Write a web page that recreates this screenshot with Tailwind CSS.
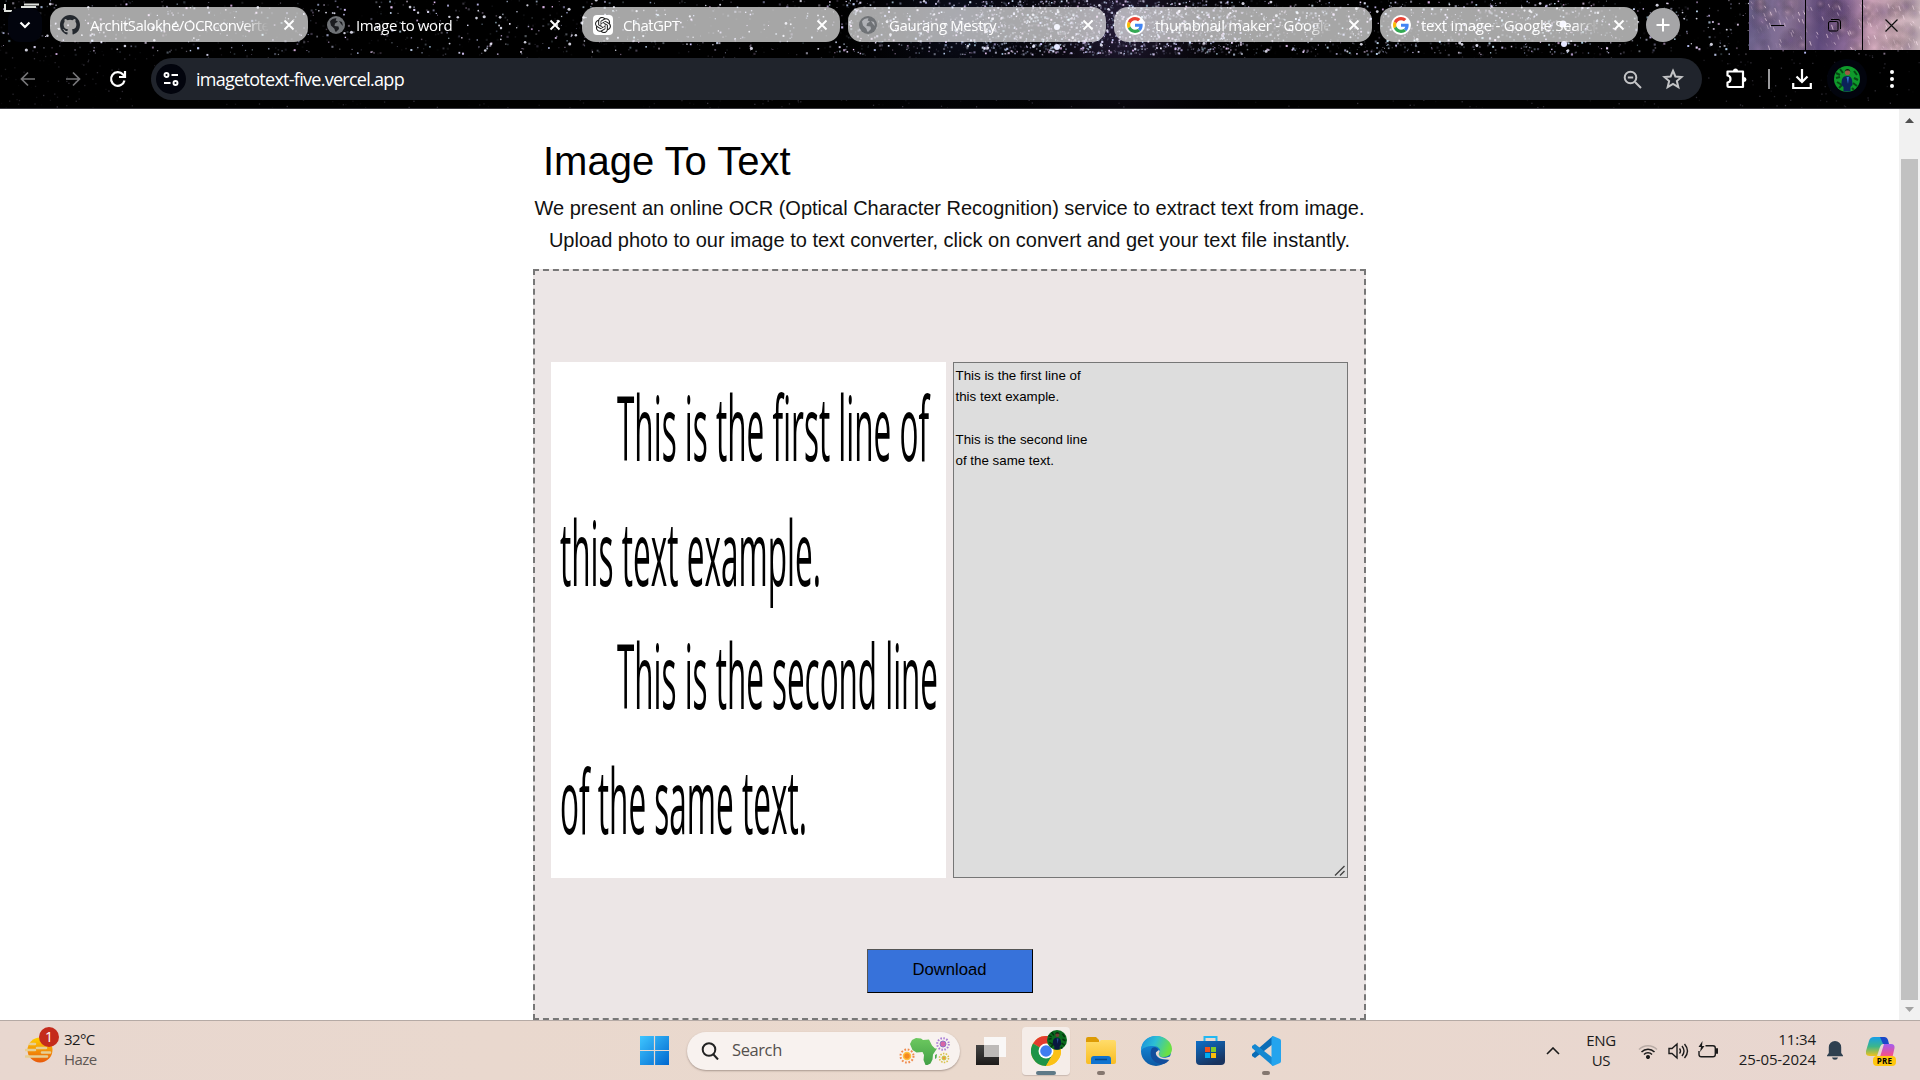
<!DOCTYPE html>
<html lang="en">
<head>
<meta charset="utf-8">
<title>Image to word</title>
<script src="https://cdn.jsdelivr.net/npm/@tailwindcss/browser@4"></script>
</head>
<body class="w-[1920px] h-[1080px] overflow-hidden bg-white flex flex-col font-['Open_Sans','Noto_Sans',sans-serif]">
<svg class="hidden">
  <symbol id="x" viewBox="0 0 12 12"><path d="M1.5 1.5l9 9M10.5 1.5l-9 9" stroke="#fff" stroke-width="1.9" fill="none"/></symbol>
  <symbol id="globe" viewBox="0 0 18 18"><circle cx="9" cy="9" r="9" fill="#6f7276"/><path d="M3 5.5C4.500 3 7 2 9.500 2.200L8.700 4.500 11 5.500 8 7.500 7.500 10 11.500 10.500 12 13 9 16C7.500 15 8 13.500 7.200 12.500L4 9.500ZM12 5l3 1 1 4-2-2z" fill="#1b1c20"/></symbol>
  <symbol id="globe2" viewBox="0 0 18 18"><circle cx="9" cy="9" r="9" fill="#6f7276"/><path d="M3 5.500C4.500 3 7 2 9.500 2.200L8.700 4.500 11 5.500 8 7.500 7.500 10 11.500 10.500 12 13 9 16C7.500 15 8 13.500 7.200 12.500L4 9.500ZM12 5l3 1 1 4-2-2z" fill="#b0b1b6"/></symbol>
  <symbol id="g" viewBox="0 0 48 48"><path fill="#EA4335" d="M24 9.500c3.540 0 6.710 1.220 9.210 3.600l6.850-6.850C35.900 2.380 30.470 0 24 0 14.620 0 6.510 5.380 2.560 13.220l7.980 6.190C12.430 13.720 17.740 9.500 24 9.500z"/><path fill="#4285F4" d="M46.980 24.550c0-1.570-.15-3.090-.38-4.550H24v9.020h12.940c-.58 2.960-2.260 5.480-4.780 7.180l7.730 6c4.510-4.180 7.090-10.360 7.090-17.650z"/><path fill="#FBBC05" d="M10.530 28.590c-.48-1.450-.76-2.990-.76-4.590s.27-3.140.76-4.590l-7.980-6.190C.92 16.460 0 20.120 0 24c0 3.880.92 7.540 2.560 10.780l7.970-6.190z"/><path fill="#34A853" d="M24 48c6.480 0 11.930-2.130 15.890-5.810l-7.730-6c-2.150 1.450-4.920 2.300-8.160 2.300-6.260 0-11.570-4.220-13.470-9.910l-7.980 6.190C6.510 42.620 14.620 48 24 48z"/></symbol>
  <symbol id="person" viewBox="0 0 26 26"><circle cx="13" cy="13" r="13" fill="#0f9a2c"/><path d="M2 7l4 2M20 5l3 4M3 16l5 3M19 17l4 3M6 3l3 4M5 22l3-3M18 22l2 2M2 12l4-1M20 12l4 2" stroke="#064a15" stroke-width="2"/><path d="M7.500 19c0-6 1-9 5.500-9s5.500 3 5.500 9l-2 2v4.500H9.500V21z" fill="#0b2358"/><path d="M12.500 11h2.500l-1 7z" fill="#2f6fd0"/><circle cx="13.500" cy="6.500" r="2.600" fill="#9a5c45"/><path d="M10.700 6c0-4 5.600-4 5.600 0l-1-1.500h-3.600z" fill="#17100f"/></symbol>
</svg>

<header class="relative h-[109px] shrink-0 bg-black border-b border-[#3a3a40] overflow-hidden text-white">
  <canvas id="sky" width="1920" height="109" class="absolute inset-0"></canvas>
  <div class="relative h-[50px] flex">
    <div class="w-[50px] pl-2 pt-2 shrink-0"><div class="size-[34px] rounded-xl bg-[#02040d] flex items-center justify-center"><svg class="w-3 h-2" viewBox="0 0 12 8"><path d="M1.500 1.500L6 6l4.500-4.500" stroke="#fff" stroke-width="2.200" fill="none"/></svg></div></div>
    <nav class="flex gap-2 pt-[7px] text-[15px] tracking-[-0.37px] [&_span]:pt-px">
      <div class="w-[258px] h-[35px] rounded-[14px] bg-white/65 flex items-center pl-2.5 pr-[13px]"><svg class="size-5 shrink-0" viewBox="0 0 16 16"><path fill="#24292f" d="M8 0C3.580 0 0 3.580 0 8c0 3.540 2.290 6.530 5.470 7.590.4.070.55-.17.55-.38v-1.490c-2.230.48-2.700-.95-2.700-.95-.36-.92-.89-1.170-.89-1.170-.73-.5.060-.49.060-.49.8.060 1.230.83 1.230.83.710 1.220 1.870.87 2.330.66.070-.52.280-.87.500-1.070-1.780-.2-3.640-.89-3.640-3.950 0-.87.310-1.590.820-2.150-.08-.2-.36-1.020.08-2.120 0 0 .67-.21 2.200.82a7.500 7.500 0 014 0c1.530-1.040 2.200-.82 2.200-.82.440 1.100.160 1.920.080 2.120.510.560.820 1.270.820 2.150 0 3.070-1.870 3.750-3.650 3.950.290.250.540.730.540 1.480v2.200c0 .210.150.460.550.380A8 8 0 0016 8c0-4.420-3.580-8-8-8z"/></svg><span class="ml-2.5 w-[178px] whitespace-nowrap overflow-hidden mask-r-from-86% tracking-[-0.55px]">ArchitSalokhe/OCRconverter</span><svg class="ml-auto size-3 shrink-0"><use href="#x"/></svg></div>
      <div class="w-[258px] h-[35px] flex items-center pl-[11px] pr-[13px]"><svg class="size-[18px]"><use href="#globe"/></svg><span class="ml-[11px] whitespace-nowrap">Image to word</span><svg class="ml-auto size-3"><use href="#x"/></svg></div>
      <div class="w-[258px] h-[35px] rounded-[14px] bg-white/65 flex items-center pl-[11px] pr-[12px]"><div class="size-5 rounded bg-white flex items-center justify-center"><svg class="size-4" viewBox="0 0 24 24" fill="#222"><path d="M22.2819 9.8211a5.9847 5.9847 0 0 0-.5157-4.9108 6.0462 6.0462 0 0 0-6.5098-2.9A6.0651 6.0651 0 0 0 4.9807 4.1818a5.9847 5.9847 0 0 0-3.9977 2.9 6.0462 6.0462 0 0 0 .7427 7.0966 5.98 5.98 0 0 0 .511 4.9107 6.051 6.051 0 0 0 6.5146 2.9001A5.9847 5.9847 0 0 0 13.2599 24a6.0557 6.0557 0 0 0 5.7718-4.2058 5.9894 5.9894 0 0 0 3.9977-2.9001 6.0557 6.0557 0 0 0-.7475-7.0729zm-9.022 12.6081a4.4755 4.4755 0 0 1-2.8764-1.0408l.1419-.0804 4.7783-2.7582a.7948.7948 0 0 0 .3927-.6813v-6.7369l2.02 1.1686a.071.071 0 0 1 .038.052v5.5826a4.504 4.504 0 0 1-4.4945 4.4944zm-9.6607-4.1254a4.4708 4.4708 0 0 1-.5346-3.0137l.142.0852 4.783 2.7582a.7712.7712 0 0 0 .7806 0l5.8428-3.3685v2.3324a.0804.0804 0 0 1-.0332.0615L9.74 19.9502a4.4992 4.4992 0 0 1-6.1408-1.6464zM2.3408 7.8956a4.485 4.485 0 0 1 2.3655-1.9728V11.6a.7664.7664 0 0 0 .3879.6765l5.8144 3.3543-2.0201 1.1685a.0757.0757 0 0 1-.071 0l-4.8303-2.7865A4.504 4.504 0 0 1 2.3408 7.872zm16.5963 3.8558L13.1038 8.364 15.1192 7.2a.0757.0757 0 0 1 .071 0l4.8303 2.7913a4.4944 4.4944 0 0 1-.6765 8.1042v-5.6772a.79.79 0 0 0-.407-.667zm2.0107-3.0231l-.142-.0852-4.7735-2.7818a.7759.7759 0 0 0-.7854 0L9.409 9.2297V6.8974a.0662.0662 0 0 1 .0284-.0615l4.8303-2.7866a4.4992 4.4992 0 0 1 6.6802 4.66zM8.3065 12.863l-2.02-1.1638a.0804.0804 0 0 1-.038-.0567V6.0742a4.4992 4.4992 0 0 1 7.3757-3.4537l-.142.0805L8.704 5.459a.7948.7948 0 0 0-.3927.6813zm1.0976-2.3654l2.602-1.4998 2.6069 1.4998v2.9994l-2.5974 1.4997-2.6067-1.4997Z"/></svg></div><span class="ml-2.5 tracking-[-0.6px]">ChatGPT</span><svg class="ml-auto size-3"><use href="#x"/></svg></div>
      <div class="w-[258px] h-[35px] rounded-[14px] bg-white/65 flex items-center pl-[11px] pr-[12px]"><svg class="size-[18px]"><use href="#globe2"/></svg><span class="ml-[12px]">Gaurang Mestry</span><svg class="ml-auto size-3"><use href="#x"/></svg></div>
      <div class="w-[258px] h-[35px] rounded-[14px] bg-white/65 flex items-center pl-[11px] pr-[12px]"><div class="size-5 rounded-full bg-white flex items-center justify-center shrink-0"><svg class="size-4"><use href="#g"/></svg></div><span class="ml-2.5 w-[177px] whitespace-nowrap overflow-hidden mask-r-from-86% tracking-[-0.25px]">thumbnail maker - Google Search</span><svg class="ml-auto size-3 shrink-0"><use href="#x"/></svg></div>
      <div class="w-[258px] h-[35px] rounded-[14px] bg-white/65 flex items-center pl-[11px] pr-[13px]"><div class="size-5 rounded-full bg-white flex items-center justify-center shrink-0"><svg class="size-4"><use href="#g"/></svg></div><span class="ml-2.5 w-[177px] whitespace-nowrap overflow-hidden mask-r-from-86% tracking-[-0.25px]">text image - Google Search</span><svg class="ml-auto size-3 shrink-0"><use href="#x"/></svg></div>
      <div class="mt-px size-[34px] rounded-full bg-[#a5a5a7] flex items-center justify-center"><svg class="size-3.5" viewBox="0 0 14 14"><path d="M7 .5v13M.5 7h13" stroke="#fff" stroke-width="2"/></svg></div>
    </nav>
    <div class="ml-auto w-[171px] h-[50px] grid grid-cols-3 divide-x divide-black">
      <div class="flex items-center justify-center"><svg width="13" height="13"><path d="M0 6.500h13" stroke="#000"/></svg></div>
      <div class="flex items-center justify-center"><svg width="13" height="13" fill="none" stroke="#000"><rect x=".5" y="2.500" width="9.500" height="9.500" rx="1.500"/><path d="M3 .5h7a2.500 2.500 0 0 1 2.500 2.500v7"/></svg></div>
      <div class="flex items-center justify-center"><svg width="13" height="13"><path d="M.5.5l12 12M12.500.5l-12 12" stroke="#111" stroke-width="1.200"/></svg></div>
    </div>
  </div>
  <div class="relative mt-2 h-[42px] flex items-center">
    <svg class="ml-5 size-4" viewBox="0 0 16 16" fill="none" stroke="#77777a" stroke-width="1.700"><path d="M15 8H1.500M8 1.500L1.500 8 8 14.500"/></svg>
    <svg class="ml-[29px] size-4" viewBox="0 0 16 16" fill="none" stroke="#77777a" stroke-width="1.700"><path d="M1 8h13.500M8 1.500L14.500 8 8 14.500"/></svg>
    <svg class="ml-7 size-[18px]" viewBox="0 0 18 18" fill="none" stroke="#fff" stroke-width="2.200"><path d="M15.500 10.500A6.800 6.800 0 1 1 14 4.500L16 6.500M16 1v6h-6"/></svg>
    <div class="ml-6 w-[1551px] h-[42px] rounded-full bg-[#20242c] flex items-center pl-[5px] pr-[18px]">
      <div class="size-[30px] rounded-full bg-[#02040d] flex items-center justify-center"><svg class="size-4" viewBox="0 0 16 16" fill="none" stroke="#fff" stroke-width="1.900"><circle cx="3.500" cy="4" r="2"/><path d="M8.500 4H15M1 12h6.500"/><circle cx="12.500" cy="12" r="2"/></svg></div>
      <span class="ml-2.5 text-[18px] tracking-[-0.72px] leading-none">imagetotext-five.vercel.app</span>
      <svg class="ml-auto size-[19px]" viewBox="0 0 19 19" fill="none" stroke="#c3c4c6" stroke-width="2"><circle cx="7.500" cy="7.500" r="5.800"/><path d="M12 12l6 6M4.800 7.500h5.400"/></svg>
      <svg class="ml-5 size-[22px]" viewBox="0 0 24 24" fill="none" stroke="#c3c4c6" stroke-width="2.200"><path d="M12 3l2.600 6.200 6.800.6-5.200 4.400 1.600 6.600-5.800-3.500-5.800 3.500 1.600-6.600L2.600 9.800l6.800-.6z"/></svg>
    </div>
    <svg class="ml-[23px] w-[22px] h-[22px]" viewBox="0 0 22 22" fill="none" stroke="#fff" stroke-width="2.200"><path d="M2.500 3.500H18V19H3.500a1 1 0 0 1-1-1v-3.500c4-.5 4-6.500 0-7z" stroke-linejoin="round"/><path d="M8 3a2.500 2.500 0 0 1 5 0zM19 9a2.500 2.500 0 0 1 0 5z" fill="#fff" stroke="none"/></svg>
    <div class="ml-[21px] w-0.5 h-5 bg-[#9a9a9c]"></div>
    <svg class="ml-[22px] w-5 h-5" viewBox="0 0 20 20" fill="none" stroke="#fff" stroke-width="2.200"><path d="M10 0v12.500M4.500 7.500L10 13l5.500-5.500M1.200 14v5h17.600v-5"/></svg>
    <div class="ml-[15px] size-10 rounded-full bg-[#02040d] flex items-center justify-center"><svg class="size-[26px]"><use href="#person"/></svg></div>
    <svg class="ml-[23px] mr-auto w-1 h-[18px]" viewBox="0 0 4 18" fill="#fff"><circle cx="2" cy="2" r="2"/><circle cx="2" cy="9" r="2"/><circle cx="2" cy="16" r="2"/></svg>
  </div>
</header>

<div class="h-[911px] shrink-0 flex overflow-hidden font-['Liberation_Sans',Arial,sans-serif] text-black">
  <main class="w-[1899px] flex flex-col items-center">
    <div class="w-[833px]">
      <h1 class="mt-[28px] pl-2.5 text-[40px] leading-[48px]">Image To Text</h1>
      <p class="mt-[7px] text-[20px] leading-8 text-center text-[#111] whitespace-nowrap">We present an online OCR (Optical Character Recognition) service to extract text from image.<br>Upload photo to our image to text converter, click on convert and get your text file instantly.</p>
      <section class="mt-[13px] h-[751px] border-2 border-dashed border-[#777] bg-[#ece6e6] px-4 pt-[91px] flex flex-col items-center">
        <div class="flex gap-[7px]">
          <svg class="w-[395px] h-[516px] bg-white font-['Open_Sans','Noto_Sans',sans-serif]" viewBox="0 0 395 516" fill="#000" font-size="90">
            <text x="66" y="98.500" textLength="312" lengthAdjust="spacingAndGlyphs">This is the first line of</text>
            <text x="9" y="223.500" textLength="261" lengthAdjust="spacingAndGlyphs">this text example.</text>
            <text x="66" y="347" textLength="321" lengthAdjust="spacingAndGlyphs">This is the second line</text>
            <text x="9" y="471.500" textLength="247" lengthAdjust="spacingAndGlyphs">of the same text.</text>
          </svg>
          <div class="relative w-[395px] h-[516px] bg-[#ddd] border border-[#767676] py-0.5 pl-[1.5px] text-[13.33px] leading-[21.33px] whitespace-pre-line">This is the first line of
this text example.

This is the second line
of the same text.<svg class="absolute right-[2px] bottom-px size-[11px]" viewBox="0 0 11 11" stroke="#444" stroke-width="1.400"><path d="M1 10.500L10.500 1M6 10.500L10.500 6"/></svg></div>
        </div>
        <button class="mt-[71px] w-[166px] h-[44px] bg-[#3772da] border border-t-[#555] border-l-[#555] border-r-black border-b-black text-[16.700px] pb-0.5">Download</button>
      </section>
    </div>
  </main>
  <aside class="w-[21px] bg-[#f1f1f1] flex flex-col items-center">
    <svg class="mt-[9px] w-[9px] h-[5px]" viewBox="0 0 9 5"><path d="M0 5L4.500 0 9 5z" fill="#505050"/></svg>
    <div class="mt-9 w-[17px] h-[841px] bg-[#c1c1c1]"></div>
    <svg class="mt-[7px] w-[9px] h-[5px]" viewBox="0 0 9 5"><path d="M0 0h9L4.500 5z" fill="#a3a3a3"/></svg>
  </aside>
</div>

<footer class="relative h-[60px] shrink-0 border-t border-[#b5aaa5] bg-linear-to-r from-[#e8d7cf] via-[#ead9cd] to-[#e8d6d0] text-[#1b1b1b] flex items-center">
  <div class="w-[640px] pl-[25px] flex items-center">
    <div class="relative size-7 -mt-0.5"><svg class="size-7" viewBox="0 0 28 28"><defs><linearGradient id="sun" x2="0" y2="1"><stop stop-color="#ffd000"/><stop offset="1" stop-color="#e8590c"/></linearGradient></defs><circle cx="15" cy="14" r="12.500" fill="url(#sun)"/><path d="M5 8h5M12 12h9M1 14h9M17 16.500h8M1 20.500h21" stroke="#e6cf93" stroke-width="2.600" stroke-linecap="round"/></svg>
      <span class="absolute left-3.5 -top-[9px] size-5 rounded-full bg-[#c42b1c] text-white text-[14px] leading-5 text-center">1</span></div>
    <div class="ml-[11px] -mt-[3px] text-[15px] leading-5 tracking-[-0.6px]">32°C<br><span class="text-[#5f5854]">Haze</span></div>
  </div>
  <div class="flex items-center">
    <svg class="w-[29px] h-[29px]" viewBox="0 0 29 29"><defs><linearGradient id="win" x2="1" y2="1"><stop stop-color="#3fc6ff"/><stop offset="1" stop-color="#0067cf"/></linearGradient></defs><path fill="url(#win)" d="M0 0h13.900v13.900H0zM15.100 0H29v13.900H15.100zM0 15.100h13.900V29H0zM15.100 15.100H29V29H15.100z"/></svg>
    <div class="ml-[18px] w-[273px] h-[38px] rounded-full bg-[#f8f2ef] shadow-[0_1px_2px_#a9988f] flex items-center pl-3.5 pr-2.5">
      <svg class="size-[18px]" viewBox="0 0 18 18" fill="none" stroke="#222" stroke-width="2"><circle cx="8" cy="7.500" r="6.300"/><path d="M12.500 12.500L17 17.500"/></svg>
      <span class="ml-[13px] text-[16.500px] tracking-[-0.4px] text-[#55504d]">Search</span>
      <svg class="ml-auto w-[51px] h-[28px]" viewBox="0 0 51 28"><defs><linearGradient id="afr" x2="0" y2="1"><stop stop-color="#6cc85f"/><stop offset="1" stop-color="#43a047"/></linearGradient></defs><path d="M11 7l2-4 4-2 5 .500 2 1.500 6-.5 3 6 3 3h2l-4 6-.5 5-2 4-3 1.500h-2l-2-5 .5-5-1.500-3-6 .5-4-2.500zM36 18l2-1-.5 4-1.500 1z" fill="url(#afr)"/><g fill="none"><circle cx="8" cy="19" r="6.500" stroke="#f08a4b" stroke-width="2" stroke-dasharray="1.700 1.700"/><circle cx="8" cy="19" r="3.500" fill="#f58a1f" stroke="#ffc23d" stroke-width="1.500"/><circle cx="44" cy="7" r="5.800" stroke="#a87bd6" stroke-width="2" stroke-dasharray="1.500 1.500"/><circle cx="44" cy="7" r="3" fill="#d765a5" stroke="#8d74c4"/><circle cx="45" cy="21" r="4.500" stroke="#d9c24c" stroke-width="1.600" stroke-dasharray="1.500 1.300"/><circle cx="45" cy="21" r="2" fill="#f39a3b" stroke="#b7cf4a"/></g></svg>
    </div>
    <svg class="ml-4 w-[30px] h-[28px]" viewBox="0 0 30 28"><defs><linearGradient id="tv" x2="0" y2="1"><stop stop-color="#444"/><stop offset="1" stop-color="#1d1b1a"/></linearGradient></defs><path d="M0 8h23v20H0z" fill="url(#tv)"/><path d="M8 0h22v20H8z" fill="#fafafa" opacity=".92"/><path d="M8 8h15v12H8z" fill="#bdbab8"/></svg>
    <div class="relative ml-4 size-12 rounded bg-[#f5ede9] shadow-[0_1px_1px_#c9b9b1]">
      <svg class="absolute left-[9px] top-[9px] size-[30px]" viewBox="0 0 48 48"><circle cx="24" cy="24" r="24" fill="#fbc116"/><path d="M24 24L3.200 12A24 24 0 0 1 44.800 12z" fill="#e33b2e"/><path d="M3.200 12A24 24 0 0 0 24 48l10.400-18-10.400-6z" fill="#1e9447"/><path d="M24 12h20.800A24 24 0 0 1 24 48l10.400-18z" fill="#fbc116"/><circle cx="24" cy="24" r="12" fill="#fff"/><circle cx="24" cy="24" r="9.300" fill="#3f7df0"/></svg>
      <svg class="absolute left-[25px] top-[3px] size-5 brightness-70"><use href="#person"/></svg>
      <span class="absolute left-3.5 top-11 w-5 h-1 rounded-full bg-[#5f7987]"></span>
    </div>
    <div class="relative ml-4 w-[30px] h-7"><svg class="w-[30px] h-7" viewBox="0 0 30 28"><defs><linearGradient id="fo" x2="0" y2="1"><stop stop-color="#ffdc6a"/><stop offset="1" stop-color="#f9bd22"/></linearGradient></defs><path d="M0 2q0-2 2-2h8l3 3v4H0z" fill="#dd9b05"/><path d="M0 5h13l2-2h13q2 0 2 2v20q0 2-2 2H2q-2 0-2-2z" fill="url(#fo)"/><path d="M5 27v-5q0-3 3-3h14q3 0 3 3v5z" fill="#1073cf"/><path d="M9 22.500h12" stroke="#064a8c" stroke-width="1.500"/></svg><span class="absolute left-[11px] top-[34px] w-2 h-1 rounded-full bg-[#85776f]"></span></div>
    <svg class="ml-[25px] w-[31px] h-[30px]" viewBox="0 0 31 30"><defs><linearGradient id="e1" x2="1" y2=".3"><stop stop-color="#1789dd"/><stop offset=".5" stop-color="#2cbfd5"/><stop offset="1" stop-color="#6be044"/></linearGradient><linearGradient id="e2" x2="0" y2="1"><stop stop-color="#1697e8"/><stop offset="1" stop-color="#0c59a4"/></linearGradient></defs><circle cx="15" cy="15" r="15" fill="url(#e2)"/><path d="M0 13C1 5 7 0 15 0c9 0 16 6 16 13 0 5-4 8-8 8-5 0-6-2-4-5 1-3-2-6-7-6-6 0-11 2-12 5z" fill="url(#e1)"/><path d="M11 12c-4 7 1 16 10 16 3 0 6-2 8-5-6 2-13 1-14-5 0-2 2-3 2-5-2-2-4-2-6-1z" fill="#124d9c"/><path d="M18 14c2 2-1 3 0 5 1 3 6 4 12 1v4l-7-.8c-5-.2-9-4-8-7z" fill="#ead9cf"/></svg>
    <svg class="ml-6 w-[29px] h-[29px]" viewBox="0 0 29 29"><defs><linearGradient id="st" x2=".5" y2="1"><stop stop-color="#0d6fc8"/><stop offset="1" stop-color="#18335f"/></linearGradient></defs><path d="M8.500 6V1h12v5" fill="none" stroke="#22b8f2" stroke-width="2"/><path d="M0 5h29v20q0 4-4 4H4q-4 0-4-4z" fill="url(#st)"/><path fill="#f1511b" d="M9 11h5v5H9z"/><path fill="#80cc28" d="M15 11h5v5h-5z"/><path fill="#00adef" d="M9 17h5v5H9z"/><path fill="#fbbc09" d="M15 17h5v5h-5z"/></svg>
    <div class="relative ml-[26px] w-[30px] h-[30px]"><svg class="size-[30px]" viewBox="0 0 30 30"><path d="M22 0v8L4 22l-3-2v-2z" fill="#0a6cb6"/><path d="M22 30v-8L4 8l-3 2v2z" fill="#1588d1"/><path d="M22 0l7 3q1 .5 1 2v20q0 1.500-1 2l-7 3-1.500-1V1z" fill="#24a4ee"/></svg><span class="absolute left-[11px] top-[35px] w-2 h-1 rounded-full bg-[#85776f]"></span></div>
  </div>
  <div class="ml-[265px] flex items-center text-[15px] leading-5 tracking-[-0.3px]">
    <svg class="w-3.5 h-2" viewBox="0 0 14 8"><path d="M1 7l6-6 6 6" fill="none" stroke="#1b1b1b" stroke-width="1.600"/></svg>
    <div class="ml-[26px] -mt-0.5 w-[30px] text-center">ENG<br>US</div>
    <svg class="ml-[22px] w-5 h-4" viewBox="0 0 20 16" fill="none" stroke="#1b1b1b" stroke-width="1.500"><path d="M1 6.500a12.500 12.500 0 0 1 18 0" stroke="#b9aca6"/><path d="M3.500 9a9 9 0 0 1 13 0M6 11.500a5.600 5.600 0 0 1 8 0"/><circle cx="10" cy="14" r="1.300" fill="#1b1b1b"/></svg>
    <svg class="ml-[10px] w-[21px] h-[18px]" viewBox="0 0 21 18" fill="none" stroke="#1b1b1b" stroke-width="1.400"><path d="M1 6.500h3L9 2v14l-5-4.500H1zM11.500 6.500q2 2.500 0 5M14 4q4 5 0 10M16.500 2q6 7 0 14"/></svg>
    <svg class="ml-[9px] -mt-0.5 w-5 h-[18px]" viewBox="0 0 20 18" fill="none" stroke="#1b1b1b" stroke-width="1.400"><path d="M7.500 4.700H15q2.300 0 2.300 2.300v6.500q0 2.300-2.300 2.300H3.300Q1 15.800 1 13.500V10"/><path d="M18 8v4h1.500V8z" fill="#1b1b1b"/><path d="M4.500 0L.5 6h2.500L2 11l4.500-6H4z" fill="#1b1b1b" stroke="none"/></svg>
    <div class="ml-4 -mt-[3px] w-[82px] text-right whitespace-nowrap tracking-[-0.1px]">11:34<br>25-05-2024</div>
    <svg class="ml-[11px] w-4 h-[19px]" viewBox="0 0 16 19" fill="#2f4050"><path d="M8 0a6.200 6.200 0 0 1 6.200 6.200V12l1.800 2.500v.8H0v-.8L1.800 12V6.200A6.200 6.200 0 0 1 8 0zM5 16.500h6q-.5 2.300-3 2.300t-3-2.300z"/></svg>
    <div class="relative ml-[23px] w-[30px] h-7"><svg class="w-[29px] h-7" viewBox="0 0 29 28"><defs><linearGradient id="c1" x2="0" y2="1"><stop stop-color="#169ee8"/><stop offset=".5" stop-color="#3cb68b"/><stop offset="1" stop-color="#f2c21b"/></linearGradient><linearGradient id="c2" x2="0" y2="1"><stop stop-color="#a35df0"/><stop offset=".6" stop-color="#ee4f93"/><stop offset="1" stop-color="#f7894a"/></linearGradient></defs><path d="M8 0h9q3 0 4 3l1 4h-5q-2 0-3 3l-3 9H4q-5 0-4-5L3 4q1-4 5-4z" fill="url(#c1)"/><path d="M14 0h4q3 0 4 3l1 4h-6z" fill="#1b48c8"/><path d="M18 7h7q4 0 3.500 4l-2 9q-1 4-5 4H10q3 0 4-4z" fill="url(#c2)"/></svg><span class="absolute left-[7px] top-[19px] w-[23px] h-[10px] rounded-sm bg-[#ffc70f] text-black text-[8px] leading-[10px] font-bold text-center tracking-[0.3px]">PRE</span></div>
  </div>
</footer>

<script>
let seed = 7;
const rnd = () => (seed = (seed * 16807) % 2147483647) / 2147483647;
const c = document.getElementById('sky').getContext('2d');
const glow = (x, y, r, col) => { const g = c.createRadialGradient(x, y, 0, x, y, r); g.addColorStop(0, col); g.addColorStop(1, 'transparent'); c.fillStyle = g; c.fillRect(x - r, y - r, 2 * r, 2 * r); };
glow(1120, 25, 150, 'rgba(62,48,95,.6)');
glow(960, 20, 140, 'rgba(25,30,65,.5)');
// stars thicken towards the galactic band near the right of the tab strip
for (let i = 0; i < 5200; i++) {
  let x = rnd() * 1920, y = rnd() * 54;
  if (i > 2200) x = 840 + rnd() * 780;
  if (i > 4000) x = 980 + rnd() * 260;
  const a = Math.pow(rnd(), 2.1), s = .8 + rnd() * 1.4;
  c.fillStyle = `rgba(${190 + rnd() * 60},${195 + rnd() * 45},255,${a})`;
  c.fillRect(x, y, s, s);
}
for (let i = 0; i < 150; i++) { c.fillStyle = 'rgba(240,240,255,.85)'; c.beginPath(); c.arc(rnd() * 1750, rnd() * 52, .7 + rnd() * .9, 0, 7); c.fill(); }
[[1057, 27, 3], [1057, 47, 3], [1563, 24, 3.5], [1564, 44, 3]].forEach(([x, y, r]) => { c.fillStyle = '#e4e6ff'; c.beginPath(); c.arc(x, y, r, 0, 7); c.fill(); });
for (let i = 0; i < 900; i++) { c.fillStyle = `rgba(190,180,215,${rnd() * .3})`; c.fillRect(rnd() * 1920, 54 + rnd() * 54, 1.3, 1.3); }
c.strokeStyle = '#dfe2dc'; c.lineWidth = 2; c.beginPath(); c.moveTo(5, 4); c.lineTo(5, 11); c.lineTo(12, 11); c.moveTo(21, 7); c.lineTo(36, 7); c.moveTo(24, 4.500); c.lineTo(39, 4.500); c.stroke();
// nebula behind the window controls
c.save(); c.beginPath(); c.rect(1749, 0, 171, 50); c.clip();
const n = c.createLinearGradient(1749, 0, 1920, 10);
[[0, '#6f6590'], [.28, '#8c7498'], [.42, '#5f4a7c'], [.58, '#8b6a98'], [.7, '#c79db4'], [.85, '#dab8c4'], [1, '#cbb6bd']].forEach(s => n.addColorStop(...s));
c.fillStyle = n; c.fillRect(1749, 0, 171, 50);
for (let i = 0; i < 80; i++) glow(1749 + rnd() * 171, rnd() * 50, 5 + rnd() * 12, ['rgba(75,50,110,.2)', 'rgba(240,195,210,.3)', 'rgba(160,115,165,.2)'][i % 3]);
for (let i = 0; i < 130; i++) { const x = 1749 + rnd() * 171, y = rnd() * 50; c.strokeStyle = `rgba(255,230,242,${rnd() * .65})`; c.lineWidth = 1; c.beginPath(); c.moveTo(x, y); c.lineTo(x + 1.500, y + 2 + rnd() * 3); c.stroke(); }
c.restore();
</script>
</body>
</html>
